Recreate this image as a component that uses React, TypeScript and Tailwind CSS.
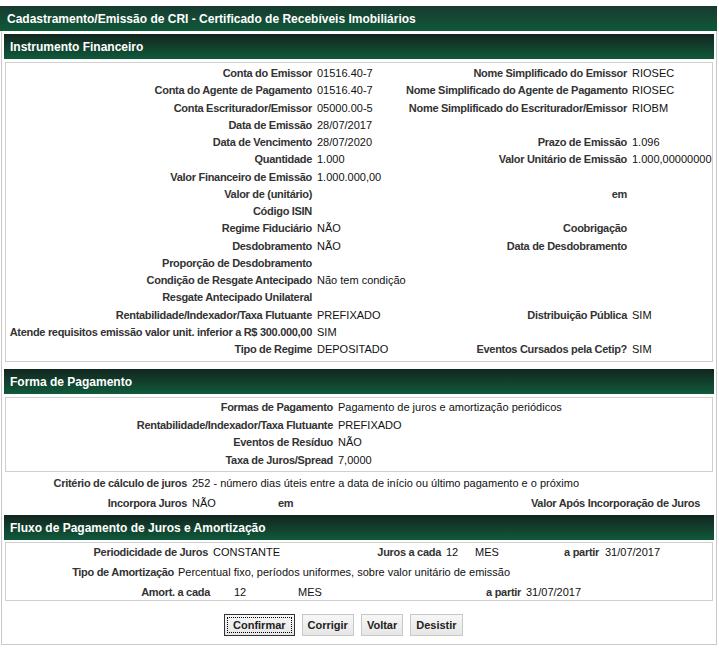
import React from "react";

// Instrumento Financeiro rows: [label, value, label2, value2]
const INSTRUMENTO: [string, string, string, string][] = [
  ["Conta do Emissor", "01516.40-7", "Nome Simplificado do Emissor", "RIOSEC"],
  ["Conta do Agente de Pagamento", "01516.40-7", "Nome Simplificado do Agente de Pagamento", "RIOSEC"],
  ["Conta Escriturador/Emissor", "05000.00-5", "Nome Simplificado do Escriturador/Emissor", "RIOBM"],
  ["Data de Emissão", "28/07/2017", "", ""],
  ["Data de Vencimento", "28/07/2020", "Prazo de Emissão", "1.096"],
  ["Quantidade", "1.000", "Valor Unitário de Emissão", "1.000,00000000"],
  ["Valor Financeiro de Emissão", "1.000.000,00", "", ""],
  ["Valor de (unitário)", "", "em", ""],
  ["Código ISIN", "", "", ""],
  ["Regime Fiduciário", "NÃO", "Coobrigação", ""],
  ["Desdobramento", "NÃO", "Data de Desdobramento", ""],
  ["Proporção de Desdobramento", "", "", ""],
  ["Condição de Resgate Antecipado", "Não tem condição", "", ""],
  ["Resgate Antecipado Unilateral", "", "", ""],
  ["Rentabilidade/Indexador/Taxa Flutuante", "PREFIXADO", "Distribuição Pública", "SIM"],
  ["Atende requisitos emissão valor unit. inferior a R$ 300.000,00", "SIM", "", ""],
  ["Tipo de Regime", "DEPOSITADO", "Eventos Cursados pela Cetip?", "SIM"],
];

const PAGAMENTO: [string, string][] = [
  ["Formas de Pagamento", "Pagamento de juros e amortização periódicos"],
  ["Rentabilidade/Indexador/Taxa Flutuante", "PREFIXADO"],
  ["Eventos de Resíduo", "NÃO"],
  ["Taxa de Juros/Spread", "7,0000"],
];

const lbl = "font-bold text-[#333] text-[11px] tracking-[-0.3px] whitespace-nowrap";
const val = "text-[#111] text-[11px] whitespace-nowrap";

function SectionHeader({ title }: { title: string }) {
  return (
    <div className="h-[25px] mx-[2px] flex items-center pl-[6px] bg-gradient-to-b from-[#10261f] to-[#0e5a3b] text-white font-bold text-[12px]">
      {title}
    </div>
  );
}

function Btn({ label, focused }: { label: string; focused?: boolean }) {
  return (
    <button
      className={
        "h-[22px] text-[11px] font-bold text-[#222] bg-gradient-to-b from-[#f7f7f7] to-[#e6e6e6] border " +
        (focused
          ? "px-[8px] border-[#333] outline outline-1 outline-dotted outline-black -outline-offset-4"
          : "px-[5px] border-[#c8c8c8]")
      }
    >
      {label}
    </button>
  );
}

export default function App() {
  return (
    <div className="w-[719px] h-[650px] bg-white pt-[6px]" style={{ fontFamily: '"Liberation Sans", Arial, sans-serif' }}>
      {/* Title */}
      <div className="w-[717px] h-[25px] flex items-center pl-[7px] bg-gradient-to-b from-[#173a2e] to-[#0d5a3a] text-white font-bold text-[12px]">
        Cadastramento/Emissão de CRI - Certificado de Recebíveis Imobiliários
      </div>

      <div className="w-[716px] ml-[1px] border border-t-0 border-[#c9c9c9] pt-[3px] pb-[8px]">
        <SectionHeader title="Instrumento Financeiro" />
        <div className="mx-[3px] mt-[3px] border border-[#cfcfcf] pt-[2px] pb-[3px]">
          <div className="grid grid-cols-[306px_94px_221px_1fr]">
            {INSTRUMENTO.map((r, i) => (
              <React.Fragment key={i}>
                <div className={lbl + " h-[17.25px] leading-[17.25px] text-right"}>{r[0]}</div>
                <div className={val + " h-[17.25px] leading-[17.25px] pl-[5px]"}>{r[1]}</div>
                <div className={lbl + " h-[17.25px] leading-[17.25px] text-right"}>{r[2]}</div>
                <div className={val + " h-[17.25px] leading-[17.25px] pl-[5px]"}>{r[3]}</div>
              </React.Fragment>
            ))}
          </div>
        </div>

        <div className="mt-[7px]">
          <SectionHeader title="Forma de Pagamento" />
        </div>
        <div className="mx-[3px] mt-[3px] border border-[#cfcfcf] pt-[1px] pb-[2px]">
          <div className="grid grid-cols-[327px_1fr]">
            {PAGAMENTO.map((r, i) => (
              <React.Fragment key={i}>
                <div className={lbl + " h-[17.5px] leading-[17.5px] text-right"}>{r[0]}</div>
                <div className={val + " h-[17.5px] leading-[17.5px] pl-[5px]"}>{r[1]}</div>
              </React.Fragment>
            ))}
          </div>
        </div>

        {/* Critério / Incorpora */}
        <div className="flex h-[21px] items-center">
          <div className={lbl + " w-[185px] text-right"}>Critério de cálculo de juros</div>
          <div className={val + " pl-[5px]"}>252 - número dias úteis entre a data de início ou último pagamento e o próximo</div>
        </div>
        <div className="flex h-[20px] items-center">
          <div className={lbl + " w-[185px] text-right"}>Incorpora Juros</div>
          <div className={val + " pl-[5px] w-[91px]"}>NÃO</div>
          <div className={lbl}>em</div>
          <div className={lbl + " ml-auto pr-[16px]"}>Valor Após Incorporação de Juros</div>
        </div>

        <div className="mt-[2px]">
          <SectionHeader title="Fluxo de Pagamento de Juros e Amortização" />
        </div>
        <div className="mx-[3px] mt-[2px] border border-[#cfcfcf]">
          <div className="flex h-[18px] items-center">
            <div className={lbl + " w-[202px] text-right"}>Periodicidade de Juros</div>
            <div className={val + " pl-[5px] w-[159px]"}>CONSTANTE</div>
            <div className={lbl + " w-[74px] text-right"}>Juros a cada</div>
            <div className={val + " pl-[5px] w-[34px]"}>12</div>
            <div className={val + " w-[55px]"}>MES</div>
            <div className={lbl + " w-[69px] text-right"}>a partir</div>
            <div className={val + " pl-[6px]"}>31/07/2017</div>
          </div>
          <div className="flex h-[22px] items-center">
            <div className={lbl + " w-[168px] text-right"}>Tipo de Amortização</div>
            <div className={val + " pl-[4px]"}>Percentual fixo, períodos uniformes, sobre valor unitário de emissão</div>
          </div>
          <div className="flex h-[17px] items-center">
            <div className={lbl + " w-[204px] text-right"}>Amort. a cada</div>
            <div className={val + " pl-[24px] w-[88px]"}>12</div>
            <div className={val + " w-[123px]"}>MES</div>
            <div className={lbl + " w-[100px] text-right"}>a partir</div>
            <div className={val + " pl-[5px]"}>31/07/2017</div>
          </div>
        </div>

        <div className="mt-[13px] flex gap-[7px] pl-[222px]">
          <Btn label="Confirmar" focused />
          <Btn label="Corrigir" />
          <Btn label="Voltar" />
          <Btn label="Desistir" />
        </div>
      </div>
    </div>
  );
}
